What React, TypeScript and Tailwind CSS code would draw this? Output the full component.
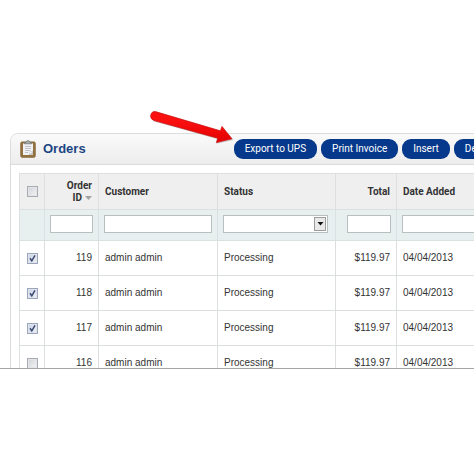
type Order = { id: number; customer: string; status: string; total: string; date: string; selected: boolean };

const orders: Order[] = [
  { id: 119, customer: "admin admin", status: "Processing", total: "$119.97", date: "04/04/2013", selected: true },
  { id: 118, customer: "admin admin", status: "Processing", total: "$119.97", date: "04/04/2013", selected: true },
  { id: 117, customer: "admin admin", status: "Processing", total: "$119.97", date: "04/04/2013", selected: true },
  { id: 116, customer: "admin admin", status: "Processing", total: "$119.97", date: "04/04/2013", selected: false },
];

const actions = ["Export to UPS", "Print Invoice", "Insert", "Delete"];

const Checkbox = ({ label, checked }: { label: string; checked?: boolean }) => (
  <label className="relative mx-auto block size-[11px]">
    <input
      type="checkbox"
      aria-label={label}
      defaultChecked={checked}
      className="peer block size-[11px] appearance-none border border-[#a9adb3] bg-linear-to-br from-[#cfd2d8] to-[#f6f6f6] ring-1 ring-[#e3e4e8] ring-inset checked:border-[#9aa6bd] checked:from-[#c9d2e6] checked:to-[#eef1f8]"
    />
    <svg viewBox="0 0 11 11" className="pointer-events-none absolute inset-0 hidden size-[11px] peer-checked:block" fill="none" stroke="#3c4a72" strokeWidth="1.5">
      <path d="M3 5.2 L4.8 7.8 L8 2.4" />
    </svg>
  </label>
);

const ClipboardIcon = () => (
  <svg viewBox="0 0 16 18" className="h-[18px] w-4" aria-hidden="true">
    <rect x="0.8" y="2" width="14.4" height="15.2" rx="1.2" fill="#94713f" stroke="#8a6a3e" />
    <rect x="3" y="3.4" width="10" height="11.6" fill="#f1f2f4" />
    <path d="M4.3 3.8 V2.4 H6 Q6.3 0.6 8 0.6 Q9.7 0.6 10 2.4 H11.7 V3.8 Z" fill="#aab0ae" stroke="#6f7470" strokeWidth="0.7" />
    <path d="M5 6.5 H11 M5 8.5 H11 M5 10.5 H10 M5 12.5 H8" stroke="#b1b5bb" strokeWidth="0.8" />
    <path d="M13 11.3 L9.4 15 H13 Z" fill="#c6c9cd" />
    <path d="M9.4 15 L9.8 11.7 L13 11.3 Z" fill="#fff" stroke="#a3a6ab" strokeWidth="0.4" />
  </svg>
);

const Arrow = () => (
  <svg viewBox="0 0 90 36" className="absolute top-[108px] left-[148px] h-9 w-[90px]" aria-hidden="true">
    <defs>
      <linearGradient id="arrow" x1="0.5" y1="0" x2="0.4" y2="1">
        <stop offset="0.3" stopColor="#fb1010" />
        <stop offset="1" stopColor="#e00000" />
      </linearGradient>
    </defs>
    <path d="M6 4.5 Q3 4.5 3 8 Q3.3 11 6 13.4 L69 31 L68.5 35.8 L85.5 32 L74 21 L72 25 Z" fill="#777" opacity="0.35" />
    <path
      d="M7.5 3.6 L72.4 22.8 L74 18.4 L84 30.8 L68.4 34.6 L69.7 30.2 L6 12.6 Q2.2 11 2.6 7.4 Q3.6 3 7.5 3.6 Z"
      fill="url(#arrow)"
      stroke="#c41010"
      strokeWidth="0.7"
      strokeLinejoin="round"
    />
  </svg>
);

const th = "h-9 border-r border-b border-[#dde0e0] px-[6px] text-left font-['Roboto',sans-serif] font-bold";
const td = "h-[35px] border-r border-b border-[#dcdfdf] px-[6px]";
const filterCell = "h-[31px] border-r border-b border-[#d9e2e2] px-[5px] pb-[2px]";
const field = "block h-[18px] w-full border border-[#b9bfc1] bg-white px-1 outline-none";

export default function App() {
  return (
    <div className="relative min-h-screen overflow-hidden bg-white pt-[133px] font-['Liberation_Sans',Arial,sans-serif] text-[10px] leading-3 text-[#333]">
      <div className="max-h-[236px] overflow-hidden border-b border-[#a5a5a5] pl-[10px]">
        <section className="w-[calc(100%+40px)] rounded-t-lg border border-[#dcdcdc] bg-white">
          <header className="flex h-[31px] items-center rounded-t-lg border-b border-[#dcdcdc] bg-linear-to-b from-[#fafafa] to-[#ededed] px-[9px]">
            <ClipboardIcon />
            <h1 className="ml-[7px] text-[13px] font-bold text-[#1c4683]">Orders</h1>
            <div className="ml-auto flex shrink-0 gap-1 font-['Roboto',sans-serif]">
              {actions.map((action) => (
                <button key={action} type="button" className="h-5 rounded-[9px] bg-[#06398b] px-[11px] whitespace-nowrap text-white">
                  {action}
                </button>
              ))}
            </div>
          </header>
          <div className="px-2 pt-2">
            <table className="w-full table-fixed border-separate border-spacing-0 border-t border-l border-[#dde0e0]">
              <colgroup>
                <col className="w-[25px]" />
                <col className="w-[54px]" />
                <col className="w-[119px]" />
                <col className="w-[118px]" />
                <col className="w-[61px]" />
                <col />
              </colgroup>
              <thead>
                <tr className="bg-[#efefef]">
                  <th className={th}><Checkbox label="Select all orders" /></th>
                  <th className={th}>
                    <span className="block text-right">Order</span>
                    <span className="flex items-center justify-end gap-[3px]">
                      ID
                      <svg viewBox="0 0 7 4" className="h-1 w-[7px]" aria-hidden="true"><path d="M0 0 H7 L3.5 4 Z" fill="#a3a3a3" /></svg>
                    </span>
                  </th>
                  <th className={th}>Customer</th>
                  <th className={th}>Status</th>
                  <th className={th}><span className="block text-right">Total</span></th>
                  <th className={th}>Date Added</th>
                </tr>
              </thead>
              <tbody>
                <tr className="bg-[#e7efef]">
                  <td className={filterCell} />
                  <td className={filterCell}><input type="text" aria-label="Filter by order ID" className={field} /></td>
                  <td className={filterCell}><input type="text" aria-label="Filter by customer" className={field} /></td>
                  <td className={filterCell}>
                    <div className="relative w-[105px]">
                      <select aria-label="Filter by status" className={`${field} appearance-none`}>
                        <option></option>
                      </select>
                      <span className="pointer-events-none absolute top-[2px] right-[2px] flex h-[14px] w-3 items-center justify-center border border-[#9c9c9c] bg-[#e9e9e9]">
                        <svg viewBox="0 0 7 4" className="h-1 w-[7px]" aria-hidden="true"><path d="M0.5 0 H6.5 L3.5 3.5 Z" fill="#111" /></svg>
                      </span>
                    </div>
                  </td>
                  <td className={filterCell}><input type="text" aria-label="Filter by total" className={`${field} ml-auto max-w-11`} /></td>
                  <td className={filterCell}><input type="text" aria-label="Filter by date added" className={field} /></td>
                </tr>
                {orders.map((order) => (
                  <tr key={order.id}>
                    <td className={td}><Checkbox label={`Select order ${order.id}`} checked={order.selected} /></td>
                    <td className={`${td} text-right`}>{order.id}</td>
                    <td className={td}>{order.customer}</td>
                    <td className={td}>{order.status}</td>
                    <td className={`${td} text-right`}>{order.total}</td>
                    <td className={td}>{order.date}</td>
                  </tr>
                ))}
              </tbody>
            </table>
          </div>
        </section>
      </div>
      <Arrow />
    </div>
  );
}
